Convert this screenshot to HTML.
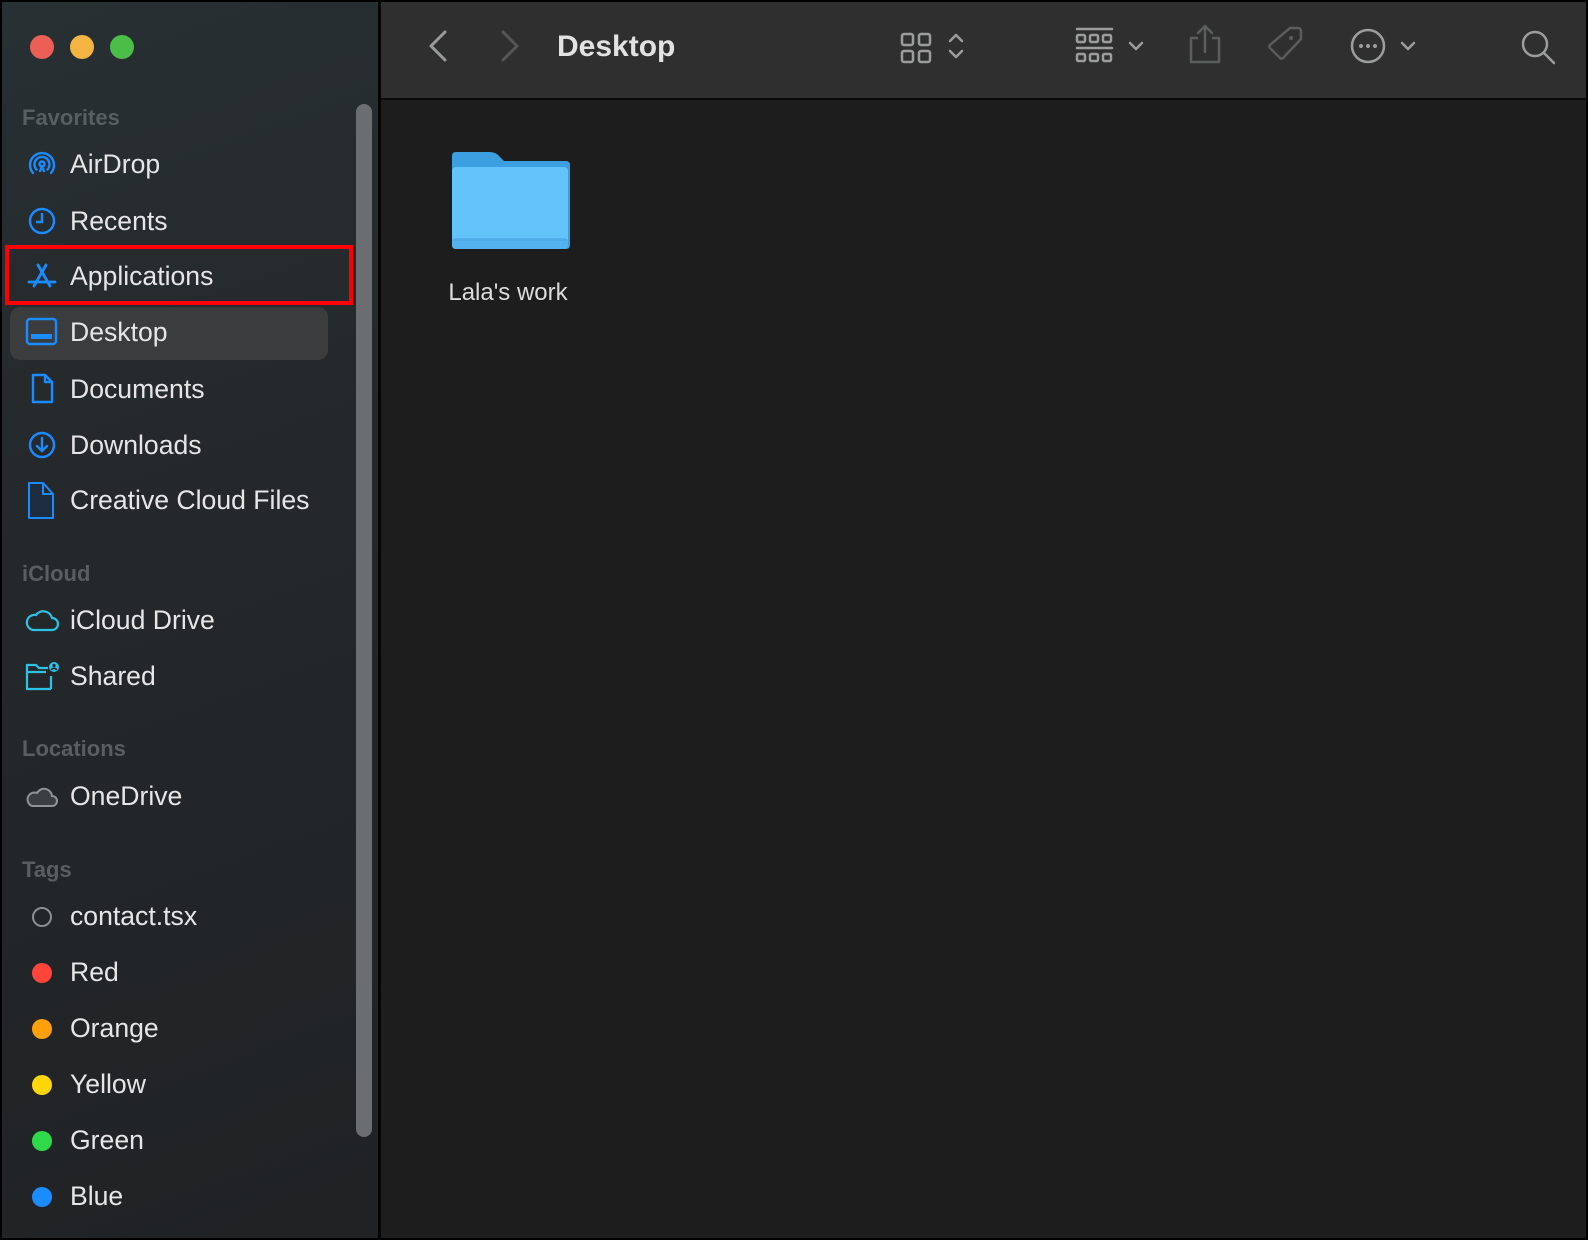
<!DOCTYPE html>
<html><head><meta charset="utf-8"><style>
*{margin:0;padding:0;box-sizing:border-box}
html,body{width:1588px;height:1240px;overflow:hidden;background:#000}
body{position:relative;font-family:"Liberation Sans",sans-serif}
#sb{position:absolute;left:2px;top:2px;width:376px;height:1236px;background:linear-gradient(160deg,#283033 0%,#25292b 35%,#202224 100%)}
#tb{position:absolute;left:381px;top:2px;width:1205px;height:96px;background:#2e2f2e}
#main{position:absolute;left:381px;top:100px;width:1205px;height:1138px;background:#1c1d1c}
.dot{position:absolute;border-radius:50%}
.row{position:absolute;left:70px;height:32px;line-height:32px;font-size:26.6px;color:#e6e6e6;white-space:nowrap}
.hd{position:absolute;left:22px;font-size:22px;font-weight:bold;color:#595e60;line-height:24px}
.ic{position:absolute;left:24px;width:36px;height:36px}
</style></head><body>
<div id="sb">
 <div class="dot" style="left:28px;top:33px;width:24px;height:24px;background:#ec5f57"></div>
 <div class="dot" style="left:68px;top:33px;width:24px;height:24px;background:#f4b441"></div>
 <div class="dot" style="left:108px;top:33px;width:24px;height:24px;background:#4cbd48"></div>
 <div style="position:absolute;left:354px;top:102px;width:16px;height:1033px;border-radius:8px;background:#6a6e71"></div>
 <div style="position:absolute;left:8px;top:305px;width:318px;height:53px;border-radius:10px;background:#3a3c3d"></div>
</div>
<div style="position:absolute;left:5px;top:245px;width:348px;height:60px;border:4px solid #f00"></div>

<div class="hd" style="top:106px">Favorites</div>
<svg class="ic" style="top:146px" viewBox="0 0 36 36" fill="none" stroke="#1a8cff" stroke-width="2.4" stroke-linecap="round"><path d="M9 27A12 12 0 1 1 27 27"/><path d="M12.5 23.5A7.5 7.5 0 1 1 23.5 23.5"/><circle cx="18" cy="18" r="2.5"/><path d="M16 25l2-4 2 4"/></svg>
<div class="row" style="top:148px">AirDrop</div>
<svg class="ic" style="top:203px" viewBox="0 0 36 36" fill="none" stroke="#1a8cff" stroke-width="2.4"><circle cx="18" cy="18" r="12"/><path d="M18 10v9h-6"/></svg>
<div class="row" style="top:205px">Recents</div>
<svg class="ic" style="top:258px" viewBox="0 0 36 36" fill="none" stroke="#1a8cff" stroke-width="2.8" stroke-linecap="round"><path d="M14 7l12 21M22 7L10 28M5 24h26"/></svg>
<div class="row" style="top:260px">Applications</div>
<svg class="ic" style="top:314px" viewBox="0 0 36 36" fill="none" stroke="#1a8cff" stroke-width="2.4"><rect x="3" y="5" width="29" height="25" rx="3"/><rect x="7" y="20" width="21" height="5" fill="#1a8cff" stroke="none"/></svg>
<div class="row" style="top:316px">Desktop</div>
<svg class="ic" style="top:371px" viewBox="0 0 36 36" fill="none" stroke="#1a8cff" stroke-width="2.4" stroke-linejoin="round"><path d="M9 4h12l7 7v20H9zM21 4v7h7"/></svg>
<div class="row" style="top:373px">Documents</div>
<svg class="ic" style="top:427px" viewBox="0 0 36 36" fill="none" stroke="#1a8cff" stroke-width="2.4" stroke-linecap="round"><circle cx="18" cy="18" r="12"/><path d="M18 11v13M13 19l5 5 5-5"/></svg>
<div class="row" style="top:429px">Downloads</div>
<svg class="ic" style="top:480px;height:40px" viewBox="0 0 36 40" fill="#1e2c40" stroke="#1a8cff" stroke-width="2" stroke-linejoin="round"><path d="M5 3h14l10 11v24H5zM19 3v11h10"/></svg>
<div class="row" style="top:484px">Creative Cloud Files</div>

<div class="hd" style="top:562px">iCloud</div>
<svg class="ic" style="top:602px" viewBox="0 0 36 36" fill="none" stroke="#2cc3e6" stroke-width="2.2"><path d="M9 28h19a6 6 0 0 0 0-12 9 9 0 0 0-16-3 7 7 0 0 0-3 15z"/></svg>
<div class="row" style="top:604px">iCloud Drive</div>
<svg class="ic" style="top:658px" viewBox="0 0 36 36" fill="none" stroke="#2cc3e6" stroke-width="2.2"><path d="M27 31H3V7h9l3 3h9M3 14h19"/><path d="M27 18v13"/><circle cx="30" cy="9" r="5" fill="#2cc3e6" stroke="none"/><circle cx="30" cy="7.5" r="1.6" fill="#23282a" stroke="none"/><path d="M27.3 12a3 3 0 0 1 5.4 0" stroke="#23282a" stroke-width="1.5"/></svg>
<div class="row" style="top:660px">Shared</div>

<div class="hd" style="top:737px">Locations</div>
<svg class="ic" style="top:778px" viewBox="0 0 36 36" fill="#3c3f41" stroke="#909498" stroke-width="2"><path d="M8 28h20a5 5 0 0 0 0-10 8 8 0 0 0-15-3 6.5 6.5 0 0 0-5 13z"/></svg>
<div class="row" style="top:780px">OneDrive</div>

<div class="hd" style="top:858px">Tags</div>
<div class="dot" style="left:32px;top:907px;width:20px;height:20px;border:2.5px solid #8c8f92"></div>
<div class="row" style="top:900px">contact.tsx</div>
<div class="dot" style="left:32px;top:963px;width:20px;height:20px;background:#ff453a"></div>
<div class="row" style="top:956px">Red</div>
<div class="dot" style="left:32px;top:1019px;width:20px;height:20px;background:#ff9f0a"></div>
<div class="row" style="top:1012px">Orange</div>
<div class="dot" style="left:32px;top:1075px;width:20px;height:20px;background:#ffd60a"></div>
<div class="row" style="top:1068px">Yellow</div>
<div class="dot" style="left:32px;top:1131px;width:20px;height:20px;background:#30d84b"></div>
<div class="row" style="top:1124px">Green</div>
<div class="dot" style="left:32px;top:1187px;width:20px;height:20px;background:#1a8cff"></div>
<div class="row" style="top:1180px">Blue</div>

<div id="tb"></div>
<div id="main"></div>
<svg style="position:absolute;left:0;top:0" width="1588" height="100" fill="none" stroke-linecap="round" stroke-linejoin="round">
 <path d="M445 32l-14 14 14 14" stroke="#9a9b9b" stroke-width="3"/>
 <path d="M503 32l14 14-14 14" stroke="#555656" stroke-width="3"/>
 <g stroke="#9c9d9d" stroke-width="2.5">
  <rect x="902" y="34" width="11" height="11" rx="2"/><rect x="919" y="34" width="11" height="11" rx="2"/>
  <rect x="902" y="51" width="11" height="11" rx="2"/><rect x="919" y="51" width="11" height="11" rx="2"/>
  <path d="M950 41l6-6 6 6M950 51l6 6 6-6"/>
  <path d="M1077 29h35M1077 48h35" />
  <rect x="1077" y="35" width="8" height="7" rx="1.5"/><rect x="1090" y="35" width="8" height="7" rx="1.5"/><rect x="1103" y="35" width="8" height="7" rx="1.5"/>
  <rect x="1077" y="54" width="8" height="7" rx="1.5"/><rect x="1090" y="54" width="8" height="7" rx="1.5"/><rect x="1103" y="54" width="8" height="7" rx="1.5"/>
  <path d="M1130 43l6 6 6-6"/>
  <circle cx="1368" cy="46" r="16"/>
  <path d="M1402 43l6 6 6-6"/>
  <circle cx="1535" cy="44" r="12"/><path d="M1544 53l10 10"/>
 </g>
 <g fill="#9c9d9d"><circle cx="1361" cy="46" r="2"/><circle cx="1368" cy="46" r="2"/><circle cx="1375" cy="46" r="2"/></g>
 <g stroke="#5b5c5c" stroke-width="2.5">
  <path d="M1197 38h-6v24h28V38h-6M1205 52V26M1198 33l7-7 7 7"/>
  <path d="M1290 28h8a3 3 0 0 1 3 3v8l-18 19a2 2 0 0 1-3 0l-10-10a2 2 0 0 1 0-3z"/>
 </g>
 <circle cx="1291" cy="38" r="2" fill="#5b5c5c"/>
 <text x="557" y="56" font-family="Liberation Sans" font-weight="bold" font-size="30" fill="#e2e2e2">Desktop</text>
</svg>
<div style="position:absolute;left:381px;top:98px;width:1207px;height:2px;background:#0a0a0a"></div>
<div style="position:absolute;left:378px;top:0;width:3px;height:1240px;background:#050505"></div>

<svg style="position:absolute;left:450px;top:150px" width="122" height="102" viewBox="0 0 122 102">
 <path d="M6 2h34q6 0 10 5l4 4h62q4 0 4 4v80q0 4-4 4H6q-4 0-4-4V6q0-4 4-4z" fill="#3b9fe0"/>
 <rect x="2" y="17" width="116" height="82" rx="4" fill="#63c3fb"/>
 <rect x="2" y="88" width="116" height="11" rx="4" fill="#54b2ee"/>
 <path d="M2 90h116" stroke="#4aa5e4" stroke-width="1"/>
</svg>
<div style="position:absolute;left:408px;top:279px;width:200px;text-align:center;font-size:24px;color:#dcdcdc">Lala's work</div>
</body></html>
